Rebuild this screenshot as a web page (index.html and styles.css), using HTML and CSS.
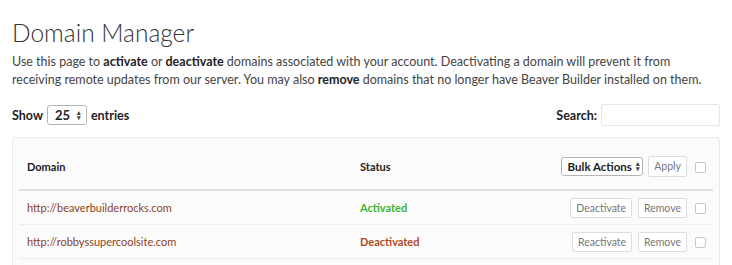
FILE: index.html
```html
<!DOCTYPE html>
<html lang="en">
<head>
    <meta charset="UTF-8">
    <title>Domain Manager</title>
    <link rel="stylesheet" href="styles.css">
</head>
<body>

    <h1 class="page-title">Domain Manager</h1>
    <p class="intro">
        Use this page to <strong>activate</strong> or <strong>deactivate</strong> domains associated with your account. Deactivating a domain will prevent it from receiving remote updates from our server. You may also <strong>remove</strong> domains that no longer have Beaver Builder installed on them.
    </p>

    <!-- Length + search controls -->
    <div class="table-controls">
        <label class="length-control">
            Show
            <span class="select-box length-select">25 <span class="arrows">&#9652;<br>&#9662;</span></span>
            entries
        </label>
        <label class="search-control">
            Search:
            <span class="search-input"></span>
        </label>
    </div>

    <div class="panel">
        <table class="domains">
            <thead>
                <tr>
                    <th class="col-domain">Domain</th>
                    <th class="col-status">Status</th>
                    <th class="col-actions">
                        <span class="select-box bulk-select">Bulk Actions <span class="arrows">&#9652;<br>&#9662;</span></span>
                        <button class="btn">Apply</button>
                    </th>
                    <th class="col-check"><span class="checkbox"></span></th>
                </tr>
            </thead>
            <tbody>
                <tr>
                    <td class="col-domain"><a href="#">http://beaverbuilderrocks.com</a></td>
                    <td class="col-status status-active">Activated</td>
                    <td class="col-actions">
                        <button class="btn">Deactivate</button>
                        <button class="btn">Remove</button>
                    </td>
                    <td class="col-check"><span class="checkbox"></span></td>
                </tr>
                <tr>
                    <td class="col-domain"><a href="#">http://robbyssupercoolsite.com</a></td>
                    <td class="col-status status-inactive">Deactivated</td>
                    <td class="col-actions">
                        <button class="btn">Reactivate</button>
                        <button class="btn">Remove</button>
                    </td>
                    <td class="col-check"><span class="checkbox"></span></td>
                </tr>
            </tbody>
        </table>
    </div>

</body>
</html>
```

FILE: styles.css
```css
/* General styles */
body {
    font-family: 'Lato', 'Open Sans', sans-serif;
    margin: 0;
    padding: 0 12px;
    width: 708px;
    background-color: #fff;
    color: #333;
    overflow: hidden;
}

/* Heading */
.page-title {
    font-size: 24.5px;
    font-weight: 300;
    color: #333;
    margin: 16px 0 0;
    line-height: 34px;
}

.intro {
    font-size: 12.5px;
    line-height: 18px;
    color: #444;
    margin: 3px 0 0;
}

.intro strong {
    font-weight: 700;
    color: #222;
}

/* Show entries / search */
.table-controls {
    display: flex;
    justify-content: space-between;
    align-items: center;
    margin-top: 15px;
    font-size: 12.5px;
    font-weight: 700;
    color: #222;
}

.length-control,
.search-control {
    display: flex;
    align-items: center;
    gap: 4px;
}

.select-box {
    display: inline-flex;
    align-items: center;
    justify-content: space-between;
    box-sizing: border-box;
    border: 1px solid #b5b5b5;
    border-radius: 3px;
    background: #fff;
    font-weight: 700;
    color: #222;
}

.arrows {
    font-size: 7px;
    line-height: 5px;
    color: #444;
    margin-left: 4px;
}

.length-select {
    width: 40px;
    height: 20px;
    padding: 0 5px 0 7px;
    font-size: 13px;
}

.search-input {
    display: inline-block;
    width: 119px;
    height: 22px;
    box-sizing: border-box;
    border: 1px solid #e6e6e6;
    border-radius: 2px;
    background: #fff;
}

/* Panel */
.panel {
    margin-top: 11px;
    border: 1px solid #e8e8e8;
    border-radius: 4px;
    background: #fbfbfb;
    padding: 5px 6px 30px;
}

.domains {
    width: 100%;
    border-collapse: collapse;
    font-size: 11px;
}

.domains th {
    text-align: left;
    font-weight: 700;
    color: #222;
    height: 46px;
    border-bottom: 2px solid #e2e2e2;
    padding: 0;
}

.domains td {
    height: 33px;
    border-bottom: 1px solid #ececec;
    padding: 0;
}

.col-domain {
    padding-left: 8px !important;
    width: 333px;
}

.domains a {
    color: #8c4226;
    text-decoration: none;
}

.status-active {
    color: #3db52e;
    font-weight: 700;
}

.status-inactive {
    color: #b04a26;
    font-weight: 700;
}

.col-actions {
    text-align: right !important;
    white-space: nowrap;
}

.col-check {
    width: 26px;
    text-align: center !important;
}

.bulk-select {
    width: 82px;
    height: 19px;
    padding: 0 5px 0 6px;
    font-size: 11.5px;
    vertical-align: middle;
}

/* Buttons */
.btn {
    font-family: 'Lato', 'Open Sans', sans-serif;
    font-size: 10.5px;
    color: #777;
    background: #fff;
    border: 1px solid #ddd;
    border-radius: 2px;
    height: 20px;
    padding: 0 5px;
    margin-left: 3px;
    vertical-align: middle;
    cursor: pointer;
}

thead .btn {
    height: 21px;
}

.checkbox {
    display: inline-block;
    width: 9px;
    height: 9px;
    border: 1px solid #c8c8c8;
    border-radius: 2px;
    background: #fff;
    vertical-align: middle;
}
```
